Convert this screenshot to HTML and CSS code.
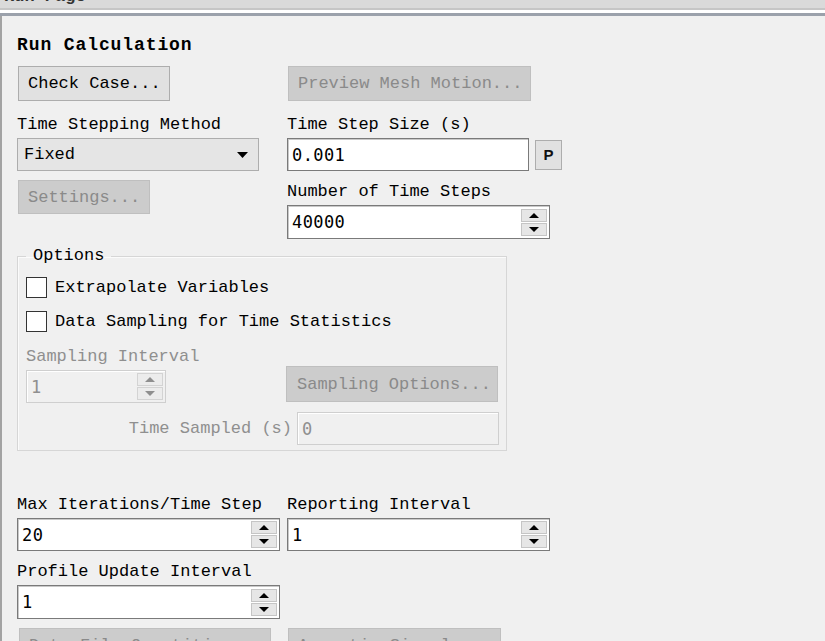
FILE: index.html
```html
<!DOCTYPE html>
<html>
<head>
<meta charset="utf-8">
<link rel="stylesheet" href="styles.css">
</head>
<body>
<div class="tabbar"><span class="tab-title">Run Page</span></div>
<div class="tabsep"></div>
<div class="panel">
  <div class="title">Run Calculation</div>

  <div class="grid top-grid">
    <div class="col">
      <button class="btn w152">Check Case...</button>
      <div class="label mt14">Time Stepping Method</div>
      <div class="select">
        <span class="value-mono">Fixed</span>
        <svg class="arrow" width="11" height="6" viewBox="0 0 11 6"><path d="M0 0H11L5.5 6Z" fill="#000"/></svg>
      </div>
      <button class="btn disabled w132 mt9" disabled>Settings...</button>
    </div>
    <div class="col">
      <button class="btn disabled w243" disabled>Preview Mesh Motion...</button>
      <div class="label mt14">Time Step Size (s)</div>
      <div class="input-row">
        <div class="input w242"><span class="num">0.001</span></div>
        <button class="pbtn">P</button>
      </div>
      <div class="label mt11">Number of Time Steps</div>
      <div class="input spin w263 h34">
        <span class="num">40000</span>
        <div class="spin-btns">
          <span class="sb"><i class="up"></i></span>
          <span class="sb"><i class="down"></i></span>
        </div>
      </div>
    </div>
  </div>

  <fieldset class="group">
    <legend>Options</legend>
    <label class="check first"><span class="box"></span>Extrapolate Variables</label>
    <label class="check second"><span class="box"></span>Data Sampling for Time Statistics</label>
    <div class="sampling-row">
      <div class="sampling-left">
        <div class="label dis">Sampling Interval</div>
        <div class="input spin dis-input w140">
          <span class="num dis">1</span>
          <div class="spin-btns">
            <span class="sb dis"><i class="up"></i></span>
            <span class="sb dis"><i class="down"></i></span>
          </div>
        </div>
      </div>
      <button class="btn disabled w212" disabled>Sampling Options...</button>
    </div>
    <div class="sampled-row">
      <span class="label dis">Time Sampled (s)</span>
      <div class="input dis-input w202"><span class="num dis">0</span></div>
    </div>
  </fieldset>

  <div class="grid bottom-grid">
    <div class="col">
      <div class="label">Max Iterations/Time Step</div>
      <div class="input spin w263">
        <span class="num">20</span>
        <div class="spin-btns">
          <span class="sb"><i class="up"></i></span>
          <span class="sb"><i class="down"></i></span>
        </div>
      </div>
      <div class="label mt11">Profile Update Interval</div>
      <div class="input spin w263 h34">
        <span class="num">1</span>
        <div class="spin-btns">
          <span class="sb"><i class="up"></i></span>
          <span class="sb"><i class="down"></i></span>
        </div>
      </div>
      <button class="btn disabled w252 mt9" disabled>Data File Quantities...</button>
    </div>
    <div class="col">
      <div class="label">Reporting Interval</div>
      <div class="input spin w263">
        <span class="num">1</span>
        <div class="spin-btns">
          <span class="sb"><i class="up"></i></span>
          <span class="sb"><i class="down"></i></span>
        </div>
      </div>
      <div class="spacer"></div>
      <button class="btn disabled w213 mt9" disabled>Acoustic Signals...</button>
    </div>
  </div>
</div>
</body>
</html>
```
FILE: styles.css
```css
html, body {
  margin: 0;
  padding: 0;
}
body {
  width: 825px;
  height: 641px;
  overflow: hidden;
  background: #f0f0f0;
  font-family: "Liberation Mono", "DejaVu Sans Mono", monospace;
  font-size: 17px;
  color: #000;
}
.tabbar {
  height: 8px;
  background: #dadada;
  border-bottom: 2px solid #c6c6c6;
  overflow: hidden;
}
.tab-title {
  display: block;
  margin-top: -13px;
  margin-left: 4px;
  line-height: 20px;
  font-weight: bold;
  font-size: 17px;
  color: #333;
}
.tabsep {
  height: 3px;
  background: #fff;
  border-bottom: 3px solid #9ba1ab;
}
.panel {
  border-left: 2px solid #a3a3a3;
  padding-left: 15px;
  height: 630px;
  box-sizing: border-box;
  overflow: hidden;
}
.title {
  margin-top: 19px;
  line-height: 20px;
  font-size: 18px;
  font-weight: bold;
  letter-spacing: 0.9px;
}
.grid {
  display: grid;
  grid-template-columns: 263px 263px;
  column-gap: 7px;
  align-items: start;
}
.top-grid { margin-top: 11px; }
.col {
  display: flex;
  flex-direction: column;
  align-items: flex-start;
}
.label {
  line-height: 20px;
  margin-bottom: 3px;
  white-space: nowrap;
}
.label.dis, .dis { color: #8f8f8f; }
.mt14 { margin-top: 14px; }
.mt11 { margin-top: 11px; }
.mt9 { margin-top: 9px; }

.btn {
  font-family: inherit;
  font-size: 17px;
  color: #000;
  height: 35px;
  margin-left: 1px;
  padding: 0 0 0 9px;
  text-align: left;
  background: #e1e1e1;
  border: 1px solid #adadad;
  box-sizing: border-box;
  white-space: nowrap;
}
.btn.disabled {
  background: #cccccc;
  border-color: #bfbfbf;
  color: #8a8a8a;
}
.btn.mt9.w132 { height: 34px; }
.w152 { width: 152px; }
.w132 { width: 132px; }
.w243 { width: 243px; }
.w242 { width: 242px; }
.w263 { width: 263px; }
.w252 { width: 252px; margin-left: 2px; }
.w213 { width: 213px; }
.w212 { width: 212px; height: 36px; margin-bottom: 1px; padding-left: 10px; }
.w140 { width: 140px; }
.w202 { width: 202px; }
.h34 { height: 34px !important; }

.select {
  width: 242px;
  height: 33px;
  box-sizing: border-box;
  background: #e5e5e5;
  border: 1px solid #adadad;
  display: flex;
  align-items: center;
  justify-content: space-between;
  padding: 0 10px 0 6px;
}
.value-mono { font-size: 17px; }

.input-row {
  display: flex;
  align-items: center;
}
.input {
  height: 33px;
  box-sizing: border-box;
  background: #fff;
  border: 1px solid #7a7a7a;
  box-shadow: inset 1px 1px 0 #c9c9c9;
  display: flex;
  align-items: center;
  padding-left: 4px;
  overflow: hidden;
}
.num {
  font-family: "DejaVu Sans Mono", monospace;
  font-size: 17px;
  letter-spacing: 0.4px;
  flex: 1;
}
.pbtn {
  margin-left: 6px;
  width: 27px;
  height: 30px;
  padding: 0;
  background: #e1e1e1;
  border: 1px solid #adadad;
  font-family: "Liberation Sans", sans-serif;
  font-weight: bold;
  font-size: 15px;
  color: #111;
}
.spin { padding-right: 2px; }
.spin-btns {
  display: flex;
  flex-direction: column;
  gap: 1px;
  width: 26px;
}
.sb {
  height: 13px;
  background: #e6e6e6;
  border: 1px solid #c5c5c5;
  box-sizing: border-box;
  display: flex;
  align-items: center;
  justify-content: center;
}
.sb i {
  width: 0;
  height: 0;
  border-left: 5px solid transparent;
  border-right: 5px solid transparent;
}
.sb i.up { border-bottom: 5px solid #000; }
.sb i.down { border-top: 5px solid #000; }
.sb.dis { background: #ececec; border-color: #d3d3d3; }
.sb.dis i.up { border-bottom-color: #8f8f8f; }
.sb.dis i.down { border-top-color: #8f8f8f; }
.dis-input {
  background: #f0f0f0;
  border: 1px solid #cfcfcf;
  box-shadow: inset 1px 1px 0 #fff;
}

.group {
  margin: 7px 0 0 0;
  width: 490px;
  box-sizing: border-box;
  padding: 0 8px 5px 8px;
  border: 1px solid #d6d6d6;
  box-shadow: inset 1px 1px 0 #fbfbfb;
  min-width: 0;
}
.group legend {
  padding: 0 7px;
  line-height: 20px;
  font-size: 17px;
}
.check {
  display: flex;
  align-items: center;
  height: 21px;
  white-space: nowrap;
}
.check.first { margin-top: 11px; }
.check.second { margin-top: 13px; }
.box {
  width: 21px;
  height: 21px;
  box-sizing: border-box;
  background: #fff;
  border: 1px solid #333;
  margin-right: 8px;
  flex: none;
}
.sampling-row {
  display: flex;
  align-items: flex-end;
  justify-content: space-between;
  margin-top: 15px;
}
.sampling-left {
  display: flex;
  flex-direction: column;
}
.sampled-row {
  display: flex;
  justify-content: flex-end;
  align-items: center;
  margin-top: 9px;
  margin-right: -1px;
}
.sampled-row .label { margin: 0 5px 0 0; }

.bottom-grid { margin-top: 44px; }
.spacer { height: 68px; }
```
